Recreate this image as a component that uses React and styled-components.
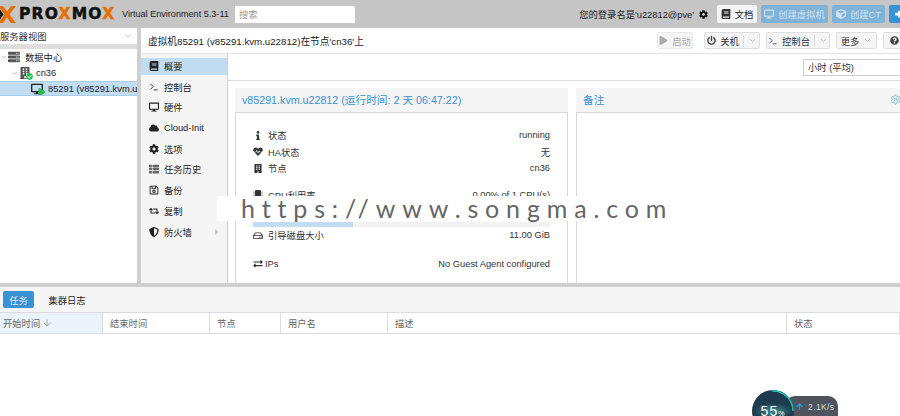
import React from "react";
import styled, { createGlobalStyle } from "styled-components";
import {
  FaBook,
  FaBuilding,
  FaCaretRight,
  FaCheckCircle,
  FaCloud,
  FaCog,
  FaCube,
  FaDesktop,
  FaExchangeAlt,
  FaHeartbeat,
  FaInfo,
  FaMicrochip,
  FaPlay,
  FaPowerOff,
  FaQuestionCircle,
  FaRegHdd,
  FaRegSave,
  FaRetweet,
  FaServer,
  FaShieldAlt,
  FaSignInAlt,
  FaThList,
} from "react-icons/fa";
import { ArrowDown, ArrowUp, ChevronDown, Settings, Terminal } from "lucide-react";

const GlobalStyle = createGlobalStyle`
  html, body {
    margin: 0;
    padding: 0;
    background: #fff;
  }
  body {
    font-family: "Liberation Sans", "Noto Sans CJK SC", sans-serif;
    font-size: 9.3px;
    color: #222;
  }
`;

const Page = styled.div`
  position: relative;
  width: 900px;
  height: 416px;
  overflow: hidden;
  display: flex;
  flex-direction: column;
`;

const Header = styled.header`
  height: 28px;
  flex-shrink: 0;
  background: #c5c5c5;
  display: flex;
  align-items: center;
`;

const Logo = styled.div`
  width: 122px;
  flex-shrink: 0;
  display: flex;
  align-items: center;
  gap: 2px;
  margin-left: -3px;
  font-family: "DejaVu Sans", sans-serif;
  font-weight: 700;
  font-size: 15.5px;
  letter-spacing: 1.2px;
  color: #111;
  -webkit-text-stroke: 0.5px #111;
  span {
    color: #e57000;
    -webkit-text-stroke: 0.5px #e57000;
  }
`;

const Version = styled.div`
  width: 113px;
  margin-left: 3px;
  flex-shrink: 0;
  font-size: 9.1px;
  color: #222;
  white-space: nowrap;
`;

const Search = styled.div`
  width: 116px;
  height: 17px;
  padding-left: 4px;
  background: #fff;
  color: #999;
  display: flex;
  align-items: center;
`;

const UserArea = styled.div`
  margin-left: auto;
  display: flex;
  align-items: center;
  margin-right: -10px;
`;

const UserName = styled.div`
  display: flex;
  align-items: center;
  gap: 5px;
  margin-right: 5px;
  white-space: nowrap;
  color: #222;
`;

const HeadButton = styled.div`
  height: 18px;
  width: ${(p) => p.$w}px;
  margin-left: 4px;
  border-radius: 2px;
  display: flex;
  align-items: center;
  justify-content: center;
  gap: 4px;
  white-space: nowrap;
  background: ${(p) => (p.$tone === "light" ? "#f5f5f5" : p.$tone === "blue" ? "#3892d4" : "#7fb3da")};
  color: ${(p) => (p.$tone === "light" ? "#222" : p.$tone === "blue" ? "#fff" : "#cfe2f1")};
  svg {
    font-size: 10px;
    color: ${(p) => (p.$tone === "light" ? "#333" : p.$tone === "blue" ? "#fff" : "#cfe2f1")};
  }
`;

const Main = styled.div`
  height: 255px;
  flex-shrink: 0;
  display: flex;
  min-height: 0;
`;

const TreePanel = styled.aside`
  width: 137px;
  flex-shrink: 0;
  display: flex;
  flex-direction: column;
  background: #fff;
`;

const ViewSelect = styled.div`
  height: 16px;
  flex-shrink: 0;
  border-bottom: 5px solid #dedede;
  display: flex;
  align-items: center;
  justify-content: space-between;
  padding-right: 4px;
  background: #fff;
  color: #333;
  svg {
    color: #aaa;
  }
`;

const TreeList = styled.div`
  display: flex;
  flex-direction: column;
`;

const TreeRow = styled.div`
  height: ${(p) => (p.$selected ? 13 : 16)}px;
  display: flex;
  align-items: center;
  gap: 5px;
  padding-left: ${(p) => p.$indent}px;
  white-space: nowrap;
  overflow: hidden;
  color: #222;
  background: ${(p) => (p.$selected ? "#c2ddf2" : "transparent")};
  border-top: ${(p) => (p.$selected ? "1px solid #a9cde8" : "none")};
  border-bottom: ${(p) => (p.$selected ? "1px solid #a9cde8" : "none")};
  svg.expander {
    color: #aaa;
    margin-right: -6px;
    flex-shrink: 0;
  }
`;

const TreeIcon = styled.span`
  position: relative;
  width: 13px;
  height: 12px;
  flex-shrink: 0;
  display: inline-flex;
  align-items: center;
  justify-content: center;
  font-size: 12px;
  color: #555;
`;

const TreeBadge = styled.span`
  position: absolute;
  right: ${(p) => (p.$play ? -3 : -2)}px;
  bottom: -1px;
  display: flex;
  font-size: ${(p) => (p.$play ? 8 : 7)}px;
  color: #21bf4b;
  background: ${(p) => (p.$play ? "transparent" : "#fff")};
  border-radius: 50%;
`;

const VSplit = styled.div`
  width: 4px;
  flex-shrink: 0;
  background: #cfcfcf;
`;

const Content = styled.section`
  flex: 1;
  min-width: 0;
  display: flex;
  flex-direction: column;
  overflow: hidden;
`;

const TitleBar = styled.div`
  height: 25px;
  flex-shrink: 0;
  padding-left: 7px;
  border-bottom: 1px solid #e3e3e3;
  display: flex;
  align-items: center;
  white-space: nowrap;
`;

const TitleText = styled.div`
  flex: 1;
  font-size: 9.7px;
  color: #222;
`;

const ToolBar = styled.div`
  display: flex;
  align-items: center;
  gap: 6px;
  margin-right: -5px;
`;

const ToolButton = styled.div`
  height: 15px;
  width: ${(p) => p.$w}px;
  margin-right: ${(p) => p.$after || 0}px;
  flex-shrink: 0;
  border: 1px solid ${(p) => (p.$off ? "#e8e8e8" : "#dedede")};
  border-radius: 2px;
  background: #f5f5f5;
  display: flex;
  align-items: center;
  justify-content: center;
  gap: 4px;
  color: ${(p) => (p.$off ? "#aaa" : "#333")};
  svg {
    font-size: 9px;
    color: ${(p) => (p.$off ? "#aaa" : "#444")};
  }
  svg.arrow {
    color: #aaa;
  }
`;

const Divider = styled.i`
  width: 1px;
  height: 12px;
  background: #dcdcdc;
`;

const Body = styled.div`
  flex: 1;
  min-height: 0;
  display: flex;
`;

const Nav = styled.nav`
  width: 86px;
  flex-shrink: 0;
  padding-top: 4px;
  background: #f5f5f5;
  border-right: 1px solid #cfcfcf;
  display: flex;
  flex-direction: column;
`;

const NavItem = styled.div`
  height: 17px;
  box-sizing: border-box;
  flex-shrink: 0;
  margin-bottom: 3.7px;
  padding: 0 0 1px 8px;
  display: flex;
  align-items: center;
  gap: 5px;
  white-space: nowrap;
  color: #222;
  background: ${(p) => (p.$active ? "#c2ddf2" : "transparent")};
  svg {
    width: 10px;
    height: 10px;
    color: ${(p) => (p.$muted ? "#666" : "#222")};
    flex-shrink: 0;
  }
  svg.more {
    margin-left: 15px;
    color: #ccc;
  }
`;

const Detail = styled.div`
  flex: 1;
  min-width: 0;
  display: flex;
  flex-direction: column;
`;

const RangeBar = styled.div`
  height: 26px;
  flex-shrink: 0;
  border-bottom: 1px solid #dcdcdc;
  display: flex;
  align-items: center;
  justify-content: flex-end;
`;

const RangeSelect = styled.div`
  width: 104px;
  height: 15px;
  flex-shrink: 0;
  margin-right: -13px;
  padding-left: 4px;
  border: 1px solid #cfcfcf;
  display: flex;
  align-items: center;
  color: #333;
`;

const Panels = styled.div`
  flex: 1;
  min-height: 0;
  padding: 7px 0 0 7px;
  display: flex;
  gap: 8px;
  overflow: hidden;
`;

const Panel = styled.div`
  width: ${(p) => p.$w}px;
  flex-shrink: 0;
  display: flex;
  flex-direction: column;
`;

const PanelHead = styled.div`
  height: 23px;
  flex-shrink: 0;
  padding: 0 7px 1px;
  background: #f5f5f5;
  display: flex;
  align-items: center;
  justify-content: space-between;
  font-size: 10.7px;
  color: #3892d4;
  white-space: nowrap;
  svg {
    color: #7db4dc;
  }
`;

const PanelBody = styled.div`
  flex: 1;
  box-sizing: border-box;
  padding: 14px 17px 0 17px;
  border: 1px solid #d8d8d8;
  border-bottom: none;
`;

const InfoRow = styled.div`
  height: 16.5px;
  margin-top: ${(p) => p.$gap || 0}px;
  display: flex;
  align-items: center;
  justify-content: space-between;
  white-space: nowrap;
  color: #333;
`;

const InfoLabel = styled.div`
  display: flex;
  align-items: center;
  gap: ${(p) => (p.$tight ? 2 : 5)}px;
  svg {
    width: 10px;
    font-size: 9.5px;
    color: #333;
  }
`;

const Meter = styled.div`
  height: 5px;
  margin-top: 19px;
  background: #f2f2f2;
`;

const MeterFill = styled.div`
  height: 100%;
  background: #c2ddf2;
`;

const HSplit = styled.div`
  height: 4px;
  flex-shrink: 0;
  background: #cfcfcf;
`;

const LogTabs = styled.div`
  height: 25px;
  flex-shrink: 0;
  padding-left: 3px;
  background: #f5f5f5;
  border-bottom: 1px solid #dcdcdc;
  display: flex;
  align-items: center;
  gap: 14px;
`;

const LogTab = styled.div`
  width: ${(p) => (p.$active ? 31 : 38)}px;
  height: 17px;
  border-radius: 2px;
  display: flex;
  align-items: center;
  justify-content: center;
  color: ${(p) => (p.$active ? "#e4f0f9" : "#222")};
  background: ${(p) => (p.$active ? "#3892d4" : "transparent")};
`;

const TableHead = styled.div`
  height: 20px;
  flex-shrink: 0;
  display: flex;
  border-bottom: 1px solid #dcdcdc;
`;

const HeadCell = styled.div`
  width: ${(p) => p.$w}px;
  flex-shrink: 0;
  box-sizing: border-box;
  padding-left: ${(p) => (p.$sorted ? 3 : 7)}px;
  display: flex;
  align-items: center;
  gap: 2px;
  color: #666;
  background: ${(p) => (p.$sorted ? "#eaf3fb" : "#fff")};
  border-right: 1px solid #dcdcdc;
  svg {
    color: #999;
  }
`;

const Watermark = styled.div`
  position: absolute;
  left: 217px;
  top: 196px;
  width: 458px;
  height: 25px;
  padding: 0 0 2px 24px;
  box-sizing: border-box;
  background: #fff;
  display: flex;
  align-items: center;
  font-family: "Lato", sans-serif;
  font-size: 25px;
  letter-spacing: 6.86px;
  color: #666;
  white-space: nowrap;
`;

const SpeedPill = styled.div`
  position: absolute;
  left: 785px;
  top: 396px;
  width: 53px;
  height: 40px;
  box-sizing: border-box;
  padding: 6px 0 0 10px;
  border-radius: 10px;
  background: #4e535c;
  display: flex;
  align-items: flex-start;
  gap: 4px;
  font-size: 8.5px;
  letter-spacing: 0.4px;
  line-height: 10px;
  color: #d5d8dc;
  svg {
    color: #1f9be8;
    flex-shrink: 0;
  }
`;

const SpeedDial = styled.div`
  position: absolute;
  left: 752px;
  top: 390px;
  width: 42px;
  height: 42px;
  border-radius: 50%;
  background: radial-gradient(ellipse 20px 8px at 50% 50%, #3f8a8f, transparent), #1d3b4c;
  color: #fff;
  font-size: 14px;
  letter-spacing: 1px;
  text-align: center;
  line-height: 42px;
  small {
    font-size: 7px;
  }
  svg {
    position: absolute;
    left: 0;
    top: 0;
  }
`;

const navItems = [
  { label: "概要", icon: FaBook, active: true },
  { label: "控制台", icon: Terminal },
  { label: "硬件", icon: FaDesktop },
  { label: "Cloud-Init", icon: FaCloud },
  { label: "选项", icon: FaCog },
  { label: "任务历史", icon: FaThList, muted: true },
  { label: "备份", icon: FaRegSave },
  { label: "复制", icon: FaRetweet },
  { label: "防火墙", icon: FaShieldAlt, more: true },
];

const columns = [
  { label: "开始时间", w: 103, sorted: true },
  { label: "结束时间", w: 107 },
  { label: "节点", w: 71 },
  { label: "用户名", w: 107 },
  { label: "描述", w: 399 },
  { label: "状态", w: 113 },
];

export default function App() {
  return (
    <Page>
      <GlobalStyle />
      <Header>
        <Logo>
          <svg width="20" height="17" viewBox="0 0 20 17">
            <path d="M1 0h5l4 5.500L14 0h5l-6.500 8.500L19 17h-5l-4-5.500L6 17H1l6.500-8.500z" fill="#e57000" />
            <path d="M0 3.500l3 0 3.500 5-3.500 5-3 0 3.500-5z" fill="#111" />
          </svg>
          <div>
            PRO<span>X</span>MO<span>X</span>
          </div>
        </Logo>
        <Version>Virtual Environment 5.3-11</Version>
        <Search>搜索</Search>
        <UserArea>
          <UserName>
            您的登录名是'u22812@pve'
            <FaCog size={9} color="#111" />
          </UserName>
          <HeadButton $w={40} $tone="light">
            <FaBook /> 文档
          </HeadButton>
          <HeadButton $w={67}>
            <FaDesktop /> 创建虚拟机
          </HeadButton>
          <HeadButton $w={53}>
            <FaCube /> 创建CT
          </HeadButton>
          <HeadButton $w={21} $tone="blue">
            <FaSignInAlt />
          </HeadButton>
        </UserArea>
      </Header>
      <Main>
        <TreePanel>
          <ViewSelect>
            服务器视图
            <ChevronDown size={10} />
          </ViewSelect>
          <TreeList>
            <TreeRow $indent={0}>
              <ChevronDown className="expander" size={8} />
              <TreeIcon>
                <FaServer />
              </TreeIcon>
              数据中心
            </TreeRow>
            <TreeRow $indent={11}>
              <ChevronDown className="expander" size={8} />
              <TreeIcon>
                <FaBuilding />
                <TreeBadge>
                  <FaCheckCircle />
                </TreeBadge>
              </TreeIcon>
              cn36
            </TreeRow>
            <TreeRow $indent={30} $selected>
              <TreeIcon>
                <FaDesktop color="#222" />
                <TreeBadge $play>
                  <FaPlay />
                </TreeBadge>
              </TreeIcon>
              85291 (v85291.kvm.u22812)
            </TreeRow>
          </TreeList>
        </TreePanel>
        <VSplit />
        <Content>
          <TitleBar>
            <TitleText>虚拟机85291 (v85291.kvm.u22812)在节点'cn36'上</TitleText>
            <ToolBar>
              <ToolButton $w={34} $after={5} $off>
                <FaPlay /> 启动
              </ToolButton>
              <ToolButton $w={54}>
                <FaPowerOff /> 关机 <Divider />
                <ChevronDown className="arrow" size={9} />
              </ToolButton>
              <ToolButton $w={62}>
                <Terminal size={10} /> 控制台 <Divider />
                <ChevronDown className="arrow" size={9} />
              </ToolButton>
              <ToolButton $w={39}>
                更多
                <ChevronDown className="arrow" size={9} />
              </ToolButton>
              <ToolButton $w={20}>
                <FaQuestionCircle />
              </ToolButton>
            </ToolBar>
          </TitleBar>
          <Body>
            <Nav>
              {navItems.map((item) => (
                <NavItem key={item.label} $active={item.active} $muted={item.muted}>
                  <item.icon />
                  {item.label}
                  {item.more && <FaCaretRight className="more" />}
                </NavItem>
              ))}
            </Nav>
            <Detail>
              <RangeBar>
                <RangeSelect>小时 (平均)</RangeSelect>
              </RangeBar>
              <Panels>
                <Panel $w={333}>
                  <PanelHead>v85291.kvm.u22812 (运行时间: 2 天 06:47:22)</PanelHead>
                  <PanelBody>
                    <InfoRow>
                      <InfoLabel>
                        <FaInfo /> 状态
                      </InfoLabel>
                      running
                    </InfoRow>
                    <InfoRow>
                      <InfoLabel>
                        <FaHeartbeat /> HA状态
                      </InfoLabel>
                      无
                    </InfoRow>
                    <InfoRow>
                      <InfoLabel>
                        <FaBuilding /> 节点
                      </InfoLabel>
                      cn36
                    </InfoRow>
                    <InfoRow $gap={10}>
                      <InfoLabel>
                        <FaMicrochip /> CPU利用率
                      </InfoLabel>
                      0.00% of 1 CPU(s)
                    </InfoRow>
                    <Meter>
                      <MeterFill style={{ width: "33.6%" }} />
                    </Meter>
                    <InfoRow>
                      <InfoLabel>
                        <FaRegHdd /> 引导磁盘大小
                      </InfoLabel>
                      11.00 GiB
                    </InfoRow>
                    <InfoRow $gap={12}>
                      <InfoLabel $tight>
                        <FaExchangeAlt /> IPs
                      </InfoLabel>
                      No Guest Agent configured
                    </InfoRow>
                  </PanelBody>
                </Panel>
                <Panel $w={332}>
                  <PanelHead>
                    备注
                    <Settings size={11} />
                  </PanelHead>
                  <PanelBody />
                </Panel>
              </Panels>
            </Detail>
          </Body>
        </Content>
      </Main>
      <HSplit />
      <LogTabs>
        <LogTab $active>任务</LogTab>
        <LogTab>集群日志</LogTab>
      </LogTabs>
      <TableHead>
        {columns.map((col) => (
          <HeadCell key={col.label} $w={col.w} $sorted={col.sorted}>
            {col.label}
            {col.sorted && <ArrowDown size={10} />}
          </HeadCell>
        ))}
      </TableHead>
      <Watermark>https://www.songma.com</Watermark>
      <SpeedPill>
        <ArrowUp size={9} strokeWidth={3.5} /> 2.1K/s
      </SpeedPill>
      <SpeedDial>
        <svg width="42" height="42" viewBox="0 0 42 42">
          <path d="M20 1a20 20 0 0 1 21 20" fill="none" stroke="#1fc4b4" strokeWidth="1.500" />
        </svg>
        55<small>%</small>
      </SpeedDial>
    </Page>
  );
}
